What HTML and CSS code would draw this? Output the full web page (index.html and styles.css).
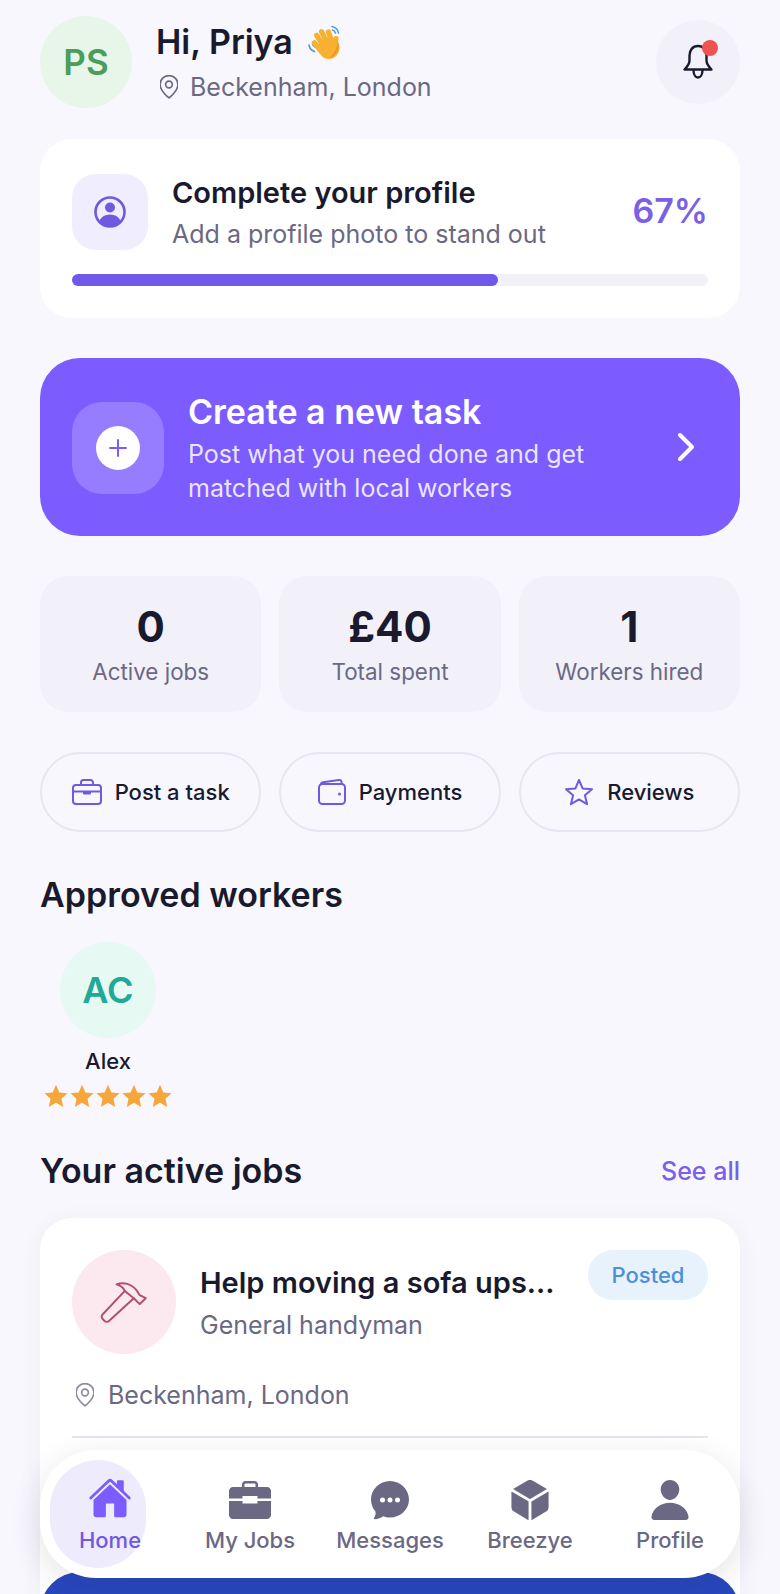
FILE: index.html
```html
<!doctype html>

<html>
    <head>
        <meta charset="utf-8">
        <title>Home - Breezye</title>
        <link rel="stylesheet" href="styles.css">
    </head>
    <body>
        <svg class="defs" width="0" height="0">
            <symbol id="pin" viewBox="4 1.5 16 21.5">
                <path d="M20 10c0 6-8 12-8 12s-8-6-8-12a8 8 0 0 1 16 0Z"/>
                <circle cx="12" cy="10" r="3"/>
            </symbol>
            <symbol id="gold-star" viewBox="0 0 24 24">
                <path d="M12 .8l3.4 7.6 8.2.9-6.1 5.5 1.7 8.1-7.2-4.1-7.2 4.1 1.7-8.1L.4 9.3l8.2-.9z"/>
            </symbol>
        </svg>

        <div class="screen">
            <!-- Greeting -->
            <header class="top">
                <div class="avatar avatar-me">PS</div>
                <div class="hello">
                    <h1>Hi, Priya
                        <svg class="wave" viewBox="0 0 36 36">
                            <g fill="none" stroke="#4a9fd8" stroke-width="1.6" stroke-linecap="round">
                                <path d="M25 2.5c3 .3 6 3 6.5 6.5"/>
                                <path d="M25.5 6c1.500.3 2.500 1.500 3 3"/>
                                <path d="M2 21c.5 3 2.500 5.500 5.500 6.500"/>
                                <path d="M5.500 19.500c.3 1.500 1 2.500 2.500 3.500"/>
                            </g>
                            <g transform="rotate(-28 20 20)" stroke="#f8b030" stroke-width="5.200" stroke-linecap="round">
                                <path d="M11.500 24L9.500 13"/>
                                <path d="M16 22L15 7.500"/>
                                <path d="M20.500 22l.5-15.500"/>
                                <path d="M25 22l2-12"/>
                                <path d="M25 26l5.500-6.500"/>
                            </g>
                            <ellipse cx="22" cy="24" rx="10.500" ry="11" fill="#f8b030"/>
                            <path d="M31 17c2 7-1 15-9 17 5-4 8-9 9-17Z" fill="#e8962a"/>
                        </svg>
                    </h1>
                    <div class="place">
                        <svg class="pin"><use href="#pin"/></svg>
                        Beckenham, London
                    </div>
                </div>
                <div class="bell">
                    <svg viewBox="0 0 30 36" width="30" height="36" fill="none" stroke="#1a1a2e" stroke-width="2.400" stroke-linejoin="round" stroke-linecap="round">
                        <path d="M15 2c-5.500 0-8.500 4.500-8.500 9.500v5c0 3.500-2 6-5 9h27c-3-3-5-5.500-5-9v-5C23.500 6.500 20.500 2 15 2Z"/>
                        <path d="M10.500 26c0 4.500 2 7.500 4.500 7.500s4.500-3 4.500-7.500"/>
                    </svg>
                    <span class="dot"></span>
                </div>
            </header>

            <!-- Profile progress -->
            <section class="card profile">
                <div class="profile-row">
                    <div class="profile-icon">
                        <svg viewBox="0 0 32 32" width="32" height="32">
                            <circle cx="16" cy="16" r="14.500" fill="none" stroke="#7058e0" stroke-width="2.600"/>
                            <circle cx="16" cy="11.500" r="5" fill="#7058e0"/>
                            <path d="M5.500 24.500C7.500 20.500 11 18.500 16 18.500s8.500 2 10.500 6C24 28 20.500 30.500 16 30.500S8 28 5.500 24.500Z" fill="#7058e0"/>
                        </svg>
                    </div>
                    <div class="profile-text">
                        <h2>Complete your profile</h2>
                        <p>Add a profile photo to stand out</p>
                    </div>
                    <div class="percent">67%</div>
                </div>
                <div class="bar"><div class="bar-fill" style="width: 67%"></div></div>
            </section>

            <!-- Create task banner -->
            <section class="banner">
                <div class="banner-icon">
                    <div class="plus">
                        <svg viewBox="0 0 20 20" width="20" height="20" fill="none" stroke="#7c5cff" stroke-width="2" stroke-linecap="round">
                            <path d="M10 2v16M2 10h16"/>
                        </svg>
                    </div>
                </div>
                <div class="banner-text">
                    <h2>Create a new task</h2>
                    <p>Post what you need done and get matched with local workers</p>
                </div>
                <svg class="chevron" viewBox="0 0 20 30" width="20" height="30" fill="none" stroke="#fff" stroke-width="4" stroke-linecap="round" stroke-linejoin="round">
                    <path d="M4 3l12 12L4 27"/>
                </svg>
            </section>

            <!-- Stats -->
            <section class="three stats">
                <div class="stat"><b>0</b><span>Active jobs</span></div>
                <div class="stat"><b>£40</b><span>Total spent</span></div>
                <div class="stat"><b>1</b><span>Workers hired</span></div>
            </section>

            <!-- Quick actions -->
            <section class="three pills">
                <div class="pill">
                    <svg viewBox="0 0 30 26" width="30" height="26" fill="none" stroke="#7058e0" stroke-width="2" stroke-linejoin="round">
                        <rect x="1" y="6" width="28" height="19" rx="3"/>
                        <path d="M9 6V3.500A2.500 2.500 0 0 1 11.500 1h7A2.500 2.500 0 0 1 21 3.500V6"/>
                        <path d="M1 12.500h28"/>
                        <path d="M12 13h6v1.500h-6z" fill="#7058e0"/>
                    </svg>
                    Post a task
                </div>
                <div class="pill">
                    <svg viewBox="0 0 28 26" width="28" height="26" fill="none" stroke="#7058e0" stroke-width="2" stroke-linejoin="round">
                        <rect x="1" y="5" width="26" height="20" rx="3.500"/>
                        <path d="M3 5.500C3 4 4 3.300 5 3.200L21 1.100c1.500-.2 2.600.7 2.600 2.400V5"/>
                        <circle cx="21.500" cy="15" r="1.500" fill="#7058e0" stroke="none"/>
                    </svg>
                    Payments
                </div>
                <div class="pill">
                    <svg viewBox="0 0 30 28" width="30" height="28" fill="none" stroke="#7058e0" stroke-width="2" stroke-linejoin="round">
                        <path d="M15 2l3.600 8.400 9.400.8-7.100 6 2.200 9L15 21.400 6.900 26.200l2.200-9-7.100-6 9.400-.8z"/>
                    </svg>
                    Reviews
                </div>
            </section>

            <!-- Approved workers -->
            <h3 class="heading approved">Approved workers</h3>
            <div class="worker">
                <div class="avatar avatar-worker">AC</div>
                <div class="worker-name">Alex</div>
                <div class="stars">
                    <svg><use href="#gold-star"/></svg>
                    <svg><use href="#gold-star"/></svg>
                    <svg><use href="#gold-star"/></svg>
                    <svg><use href="#gold-star"/></svg>
                    <svg><use href="#gold-star"/></svg>
                </div>
            </div>

            <!-- Active jobs -->
            <div class="section-head">
                <h3 class="heading">Your active jobs</h3>
                <a class="see-all">See all</a>
            </div>
            <section class="card job">
                <div class="job-row">
                    <div class="job-icon">
                        <svg viewBox="120 120 145 130" width="48" height="43" fill="none" stroke="#b0506e" stroke-width="6" stroke-linecap="round" stroke-linejoin="round">
                            <path d="M195 150L127 222c-3 4-2 9 1 13l5 5c4 4 11 4 15 0l74-68"/>
                            <path d="M170 130c20-8 45-2 62 20l8 13 18 9-18 18-18-18-27-22c-5-10-15-17-25-20Z"/>
                        </svg>
                    </div>
                    <div class="job-text">
                        <h4>Help moving a sofa ups...</h4>
                        <p>General handyman</p>
                    </div>
                    <span class="badge">Posted</span>
                </div>
                <div class="job-place">
                    <svg class="pin pin-light"><use href="#pin"/></svg>
                    Beckenham, London
                </div>
                <div class="divider"></div>
            </section>

            <!-- Next thing on the page, mostly hidden by the tab bar -->
            <div class="peek"></div>

            <!-- Tab bar -->
            <nav class="tabs">
                <span class="tab-active"></span>
                <a class="tab on">
                    <svg viewBox="0 0 512 512" width="44" height="44">
                        <path d="M261.560 101.280a8 8 0 00-11.060 0L66.400 277.150a8 8 0 00-2.470 5.790L63.900 448a32 32 0 0032 32H192a16 16 0 0016-16V328a8 8 0 018-8h80a8 8 0 018 8v136a16 16 0 0016 16h96.060a32 32 0 0032-32V282.940a8 8 0 00-2.470-5.790z"/>
                        <path d="M490.910 244.150l-74.800-71.560V64a16 16 0 00-16-16h-48a16 16 0 00-16 16v32l-57.920-55.380C272.770 35.140 264.710 32 256 32c-8.680 0-16.720 3.140-22.140 8.630l-212.700 203.500c-6.220 6-7 15.870-1.340 22.370A16 16 0 0043 267.560L250.500 69.280a8 8 0 0111.060 0l207.520 198.280a16 16 0 0022.590-.44c6.140-6.360 5.630-16.860-.76-22.970z"/>
                    </svg>
                    Home
                </a>
                <a class="tab">
                    <svg viewBox="0 0 44 40" width="44" height="40">
                        <path d="M14 7V4.500C14 2.500 15.500 1 17.500 1h9C28.500 1 30 2.500 30 4.500V7h-2.500V4.800c0-.8-.5-1.300-1.300-1.300h-8.400c-.8 0-1.300.5-1.300 1.300V7Z"/>
                        <path d="M5 7h34c2.200 0 4 1.800 4 4v7.500H29.500V16h-15v2.500H1V11c0-2.200 1.800-4 4-4Z"/>
                        <path d="M1 21h13.500v2.500h15V21H43v14c0 2.200-1.800 4-4 4H5c-2.200 0-4-1.800-4-4Z"/>
                    </svg>
                    My Jobs
                </a>
                <a class="tab">
                    <svg viewBox="0 0 40 40" width="40" height="40">
                        <path d="M20 1C9.500 1 1 9.300 1 19.500c0 4.600 1.700 8.800 4.500 12 .4 2.300-.2 4.700-1.500 6.500-.5.700 0 1.300.8 1.200 3.200-.3 6-1.300 8.300-3 2.100.8 4.500 1.300 6.900 1.300 10.500 0 19-8 19-18S30.500 1 20 1Z"/>
                        <circle cx="12.500" cy="20" r="2.500" fill="#fff"/>
                        <circle cx="20" cy="20" r="2.500" fill="#fff"/>
                        <circle cx="27.500" cy="20" r="2.500" fill="#fff"/>
                    </svg>
                    Messages
                </a>
                <a class="tab">
                    <svg viewBox="44 32 424 448" width="38" height="40">
                        <path d="M440.900 136.300a4 4 0 000-6.910L288.160 40.650a64.140 64.140 0 00-64.330 0L71.120 129.390a4 4 0 000 6.910L254 243.880a4 4 0 004.060 0zM54 163.510a4 4 0 00-6 3.490v173.890a48 48 0 0023.840 41.390L234 479.510a4 4 0 006-3.460V274.300a4 4 0 00-2-3.460zM272 275v201a4 4 0 006 3.460l162.150-97.230A48 48 0 00464 340.890V167a4 4 0 00-6-3.450l-184 108a4 4 0 00-2 3.450z"/>
                    </svg>
                    Breezye
                </a>
                <a class="tab">
                    <svg viewBox="46 32 420 448" width="38" height="40">
                        <path d="M332.640 64.580C313.180 43.570 286 32 256 32c-30.160 0-57.430 11.500-76.800 32.380-19.580 21.110-29.120 49.800-26.880 80.780C156.760 206.280 203.270 256 256 256s99.160-49.710 103.670-110.820c2.270-30.700-7.330-59.330-27.030-80.600zM432 480H80a31 31 0 01-24.200-11.130c-6.500-7.770-9.120-18.380-7.180-29.110C57.060 392.940 83.400 353.610 124.800 326c36.780-24.510 83.370-38 131.200-38s94.420 13.500 131.200 38c41.400 27.600 67.740 66.930 76.180 113.750 1.940 10.730-.68 21.340-7.180 29.110A31 31 0 01432 480z"/>
                    </svg>
                    Profile
                </a>
            </nav>
        </div>
    </body>
</html>
```

FILE: styles.css
```css
* { box-sizing: border-box; }
body {
    margin: 0;
    background: #f8f7fd;
    color: #1a1a2e;
    font-family: Inter, "Noto Sans", sans-serif;
}
h1, h2, h3, h4, p { margin: 0; }
.defs { position: absolute; }
.screen {
    position: relative;
    width: 780px;
    height: 1594px;
    padding: 16px 40px 0;
    overflow: hidden;
}

/* greeting */
.top {
    display: flex;
    align-items: center;
    height: 92px;
}
.avatar {
    display: flex;
    align-items: center;
    justify-content: center;
    border-radius: 50%;
    font-weight: 600;
}
.avatar-me {
    width: 92px;
    height: 92px;
    background: #e8f5e9;
    color: #4a9d5b;
    font-size: 35px;
}
.hello {
    flex: 1;
    margin-left: 24px;
}
.hello h1 {
    display: flex;
    align-items: center;
    gap: 14px;
    font-size: 34px;
    font-weight: 600;
    line-height: 44px;
}
.wave { width: 36px; height: 36px; }
.place {
    display: flex;
    align-items: center;
    gap: 12px;
    margin-top: 6px;
    padding-left: 4px;
    font-size: 25px;
    line-height: 34px;
    color: #6b6884;
}
.pin {
    width: 18px;
    height: 24px;
    fill: none;
    stroke: #6b6884;
    stroke-width: 1.500;
}
.pin-light { stroke: #8d8b9f; }
.bell {
    position: relative;
    display: flex;
    align-items: center;
    justify-content: center;
    width: 84px;
    height: 84px;
    border-radius: 50%;
    background: #f2f1fa;
}
.dot {
    position: absolute;
    top: 20px;
    right: 22px;
    width: 16px;
    height: 16px;
    border-radius: 50%;
    background: #ef5350;
}

/* cards */
.card {
    padding: 32px;
    border-radius: 32px;
    background: #fff;
}
.profile { margin-top: 31px; }
.profile-row {
    display: flex;
    align-items: center;
    height: 82px;
}
.profile-icon {
    display: flex;
    align-items: center;
    justify-content: center;
    width: 76px;
    height: 76px;
    border-radius: 24px;
    background: #f0edff;
}
.profile-text {
    flex: 1;
    margin-left: 24px;
}
.profile-text h2 {
    font-size: 29px;
    font-weight: 600;
    line-height: 40px;
}
.profile-text p {
    margin-top: 4px;
    font-size: 25px;
    line-height: 34px;
    color: #6b6884;
}
.percent {
    margin-bottom: 4px;
    font-size: 34px;
    font-weight: 600;
    color: #7a60e8;
}
.bar {
    height: 12px;
    margin-top: 21px;
    border-radius: 6px;
    background: #f2f1fa;
}
.bar-fill {
    height: 12px;
    border-radius: 6px;
    background: #7058e8;
}

/* banner */
.banner {
    display: flex;
    align-items: center;
    height: 178px;
    margin-top: 40px;
    padding: 0 44px 0 32px;
    border-radius: 40px;
    background: #7c5cff;
    color: #fff;
}
.banner-icon {
    display: flex;
    align-items: center;
    justify-content: center;
    width: 92px;
    height: 92px;
    margin-top: 2px;
    border-radius: 30px;
    background: rgba(255, 255, 255, 0.2);
}
.plus {
    display: flex;
    align-items: center;
    justify-content: center;
    width: 44px;
    height: 44px;
    border-radius: 50%;
    background: #fff;
}
.banner-text {
    margin-left: 24px;
    flex: 1;
}
.banner-text h2 {
    font-size: 34px;
    font-weight: 600;
    line-height: 44px;
}
.banner-text p {
    max-width: 430px;
    margin-top: 3px;
    font-size: 25px;
    line-height: 34px;
    color: rgba(255, 255, 255, 0.85);
}

/* stats and pills share the three columns */
.three {
    display: grid;
    grid-template-columns: repeat(3, 1fr);
    gap: 18px;
    margin-top: 40px;
}
.stat {
    display: flex;
    flex-direction: column;
    align-items: center;
    justify-content: center;
    height: 136px;
    border-radius: 28px;
    background: #f2f1fa;
}
.stat b {
    font-size: 42px;
    font-weight: 700;
    line-height: 52px;
}
.stat span {
    margin-top: 4px;
    font-size: 22.4px;
    line-height: 30px;
    color: #6b6884;
}
.pill {
    display: flex;
    align-items: center;
    justify-content: center;
    gap: 13px;
    height: 80px;
    border: 2px solid #e8e6f2;
    border-radius: 40px;
    font-size: 22px;
    font-weight: 450;
}

/* sections */
.heading {
    font-size: 34px;
    font-weight: 600;
    line-height: 46px;
}
.approved { margin-top: 40px; }
.worker {
    display: flex;
    flex-direction: column;
    align-items: center;
    width: 136px;
    margin-top: 24px;
}
.avatar-worker {
    width: 96px;
    height: 96px;
    background: #e6f9f3;
    color: #20a898;
    font-size: 36px;
}
.worker-name {
    margin-top: 8px;
    font-size: 22px;
    font-weight: 450;
    line-height: 30px;
}
.stars {
    display: flex;
    gap: 2px;
    margin-top: 8px;
}
.stars svg {
    width: 24px;
    height: 24px;
    fill: #f5a73b;
}
.section-head {
    display: flex;
    align-items: center;
    justify-content: space-between;
    margin-top: 40px;
}
.see-all {
    font-size: 25px;
    font-weight: 450;
    color: #7a60e8;
}

/* job card */
.job {
    margin-top: 24px;
    height: 500px;
    box-shadow: 0 4px 24px rgba(60, 50, 120, 0.05);
}
.job-row {
    display: flex;
    align-items: center;
    position: relative;
}
.job-icon {
    display: flex;
    align-items: center;
    justify-content: center;
    width: 104px;
    height: 104px;
    border-radius: 50%;
    background: #fbe9ef;
}
.job-text { margin-left: 24px; }
.job-text h4 {
    font-size: 29px;
    font-weight: 600;
    line-height: 40px;
}
.job-text p {
    margin-top: 5px;
    font-size: 25px;
    line-height: 34px;
    color: #6b6884;
}
.badge {
    position: absolute;
    top: 0;
    right: 0;
    width: 120px;
    height: 50px;
    border-radius: 25px;
    background: #e8f2fd;
    color: #4a90d9;
    font-size: 22px;
    font-weight: 450;
    line-height: 50px;
    text-align: center;
}
.job-place {
    display: flex;
    align-items: center;
    gap: 14px;
    margin-top: 24px;
    padding-left: 4px;
    font-size: 25px;
    line-height: 34px;
    color: #6b6884;
}
.divider {
    height: 2px;
    margin-top: 24px;
    background: #e6e4f0;
}

/* overlays at the bottom of the screen */
.peek {
    position: absolute;
    left: 40px;
    right: 40px;
    top: 1572px;
    height: 60px;
    border-radius: 40px 40px 0 0;
    background: #2847bd;
}
.tabs {
    position: absolute;
    left: 40px;
    right: 40px;
    top: 1450px;
    display: grid;
    grid-template-columns: repeat(5, 1fr);
    height: 128px;
    border-radius: 56px;
    background: #fff;
    box-shadow: 0 8px 32px rgba(30, 30, 60, 0.12);
}
.tab-active {
    position: absolute;
    left: 10px;
    top: 10px;
    width: 96px;
    height: 108px;
    border-radius: 48px;
    background: #eeebfd;
}
.tab {
    position: relative;
    display: flex;
    flex-direction: column;
    align-items: center;
    justify-content: flex-end;
    gap: 6px;
    padding-bottom: 24px;
    font-size: 22px;
    font-weight: 450;
    line-height: 28px;
    color: #6b6884;
}
.tab svg { fill: #6b6884; }
.tab.on { color: #7058e0; }
.tab.on svg { fill: #7c5cff; }
```
